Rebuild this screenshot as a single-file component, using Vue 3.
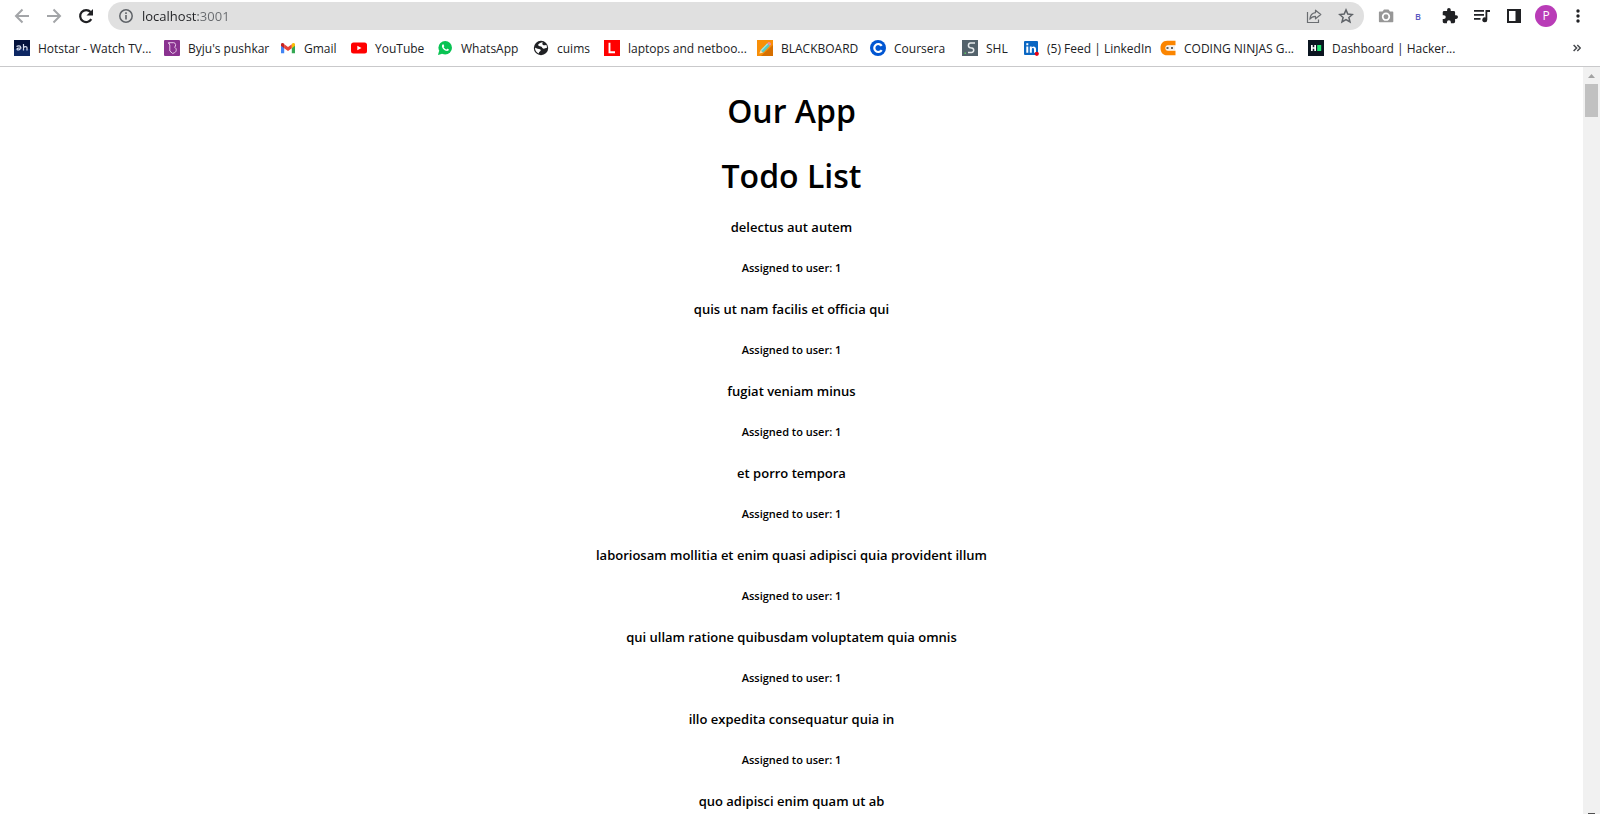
<script setup>
import { ref } from 'vue'

const address = ref('localhost:3001')

const bookmarks = [
  { icon: 'hotstar', label: 'Hotstar - Watch TV...' },
  { icon: 'byjus', label: "Byju's pushkar" },
  { icon: 'gmail', label: 'Gmail' },
  { icon: 'youtube', label: 'YouTube' },
  { icon: 'whatsapp', label: 'WhatsApp' },
  { icon: 'globe', label: 'cuims' },
  { icon: 'letter', label: 'laptops and netboo...' },
  { icon: 'pencil', label: 'BLACKBOARD' },
  { icon: 'coursera', label: 'Coursera' },
  { icon: 'shl', label: 'SHL' },
  { icon: 'linkedin', label: '(5) Feed | LinkedIn' },
  { icon: 'ninjas', label: 'CODING NINJAS G...' },
  { icon: 'hacker', label: 'Dashboard | Hacker...' },
]

const todos = [
  { id: 1, userId: 1, title: 'delectus aut autem' },
  { id: 2, userId: 1, title: 'quis ut nam facilis et officia qui' },
  { id: 3, userId: 1, title: 'fugiat veniam minus' },
  { id: 4, userId: 1, title: 'et porro tempora' },
  { id: 5, userId: 1, title: 'laboriosam mollitia et enim quasi adipisci quia provident illum' },
  { id: 6, userId: 1, title: 'qui ullam ratione quibusdam voluptatem quia omnis' },
  { id: 7, userId: 1, title: 'illo expedita consequatur quia in' },
  { id: 8, userId: 1, title: 'quo adipisci enim quam ut ab' },
]
</script>

<template>
  <div class="browser">
    <header class="chrome">
      <div class="toolbar">
        <button class="tool" aria-label="Back">
          <svg width="16" height="16" viewBox="0 0 16 16" fill="none" stroke="#a3a5a8" stroke-width="2"><path d="M15 8H2.5M8.5 1.500 2 8l6.500 6.500" /></svg>
        </button>
        <button class="tool" aria-label="Forward">
          <svg width="16" height="16" viewBox="0 0 16 16" fill="none" stroke="#a3a5a8" stroke-width="2"><path d="M1 8h12.500M7.500 1.500 14 8l-6.500 6.500" /></svg>
        </button>
        <button class="tool" aria-label="Reload">
          <svg width="16" height="16" viewBox="0 0 16 16"><path d="M13.300 11.200A6 6 0 1 1 12.600 4" fill="none" stroke="#202124" stroke-width="2.200" /><path d="M15 1v6.500H8.500z" fill="#202124" /></svg>
        </button>
        <div class="omnibox">
          <button class="site" aria-label="Site information">
            <svg width="14" height="14" viewBox="0 0 14 14"><circle cx="7" cy="7" r="6.200" fill="none" stroke="#5f6368" stroke-width="1.500" /><path d="M6.200 6h1.600v4.500H6.200zM6.200 3.300h1.600v1.600H6.200z" fill="#5f6368" /></svg>
          </button>
          <input v-model="address" class="address" type="text" aria-label="Address" spellcheck="false" />
          <button class="tool" aria-label="Share">
            <svg width="16" height="16" viewBox="0 0 16 16" fill="none" stroke="#6a6d71" stroke-width="1.200"><path d="M1.500 4v10.500h11V11.500" /><path d="M9.500 2.200 14.800 6.500 9.500 10.800V8.400C6.600 8.400 5 9.400 3.800 11.200 4.200 7.600 6 5.100 9.500 4.700z" stroke-linejoin="round" /></svg>
          </button>
          <button class="tool" aria-label="Bookmark this page">
            <svg width="16" height="16" viewBox="0 0 16 16"><path d="m8 1.900 1.800 4.200 4.600.4-3.500 3 1.100 4.500L8 11.600 4 14l1.100-4.500-3.500-3 4.600-.4z" fill="none" stroke="#5f6368" stroke-width="1.500" /></svg>
          </button>
        </div>
        <button class="tool" aria-label="Screenshot">
          <svg width="16" height="16" viewBox="0 0 16 16"><path d="M2 3.500h2.500L6 1.500h4.500l1.500 2h2.500a.8.8 0 0 1 .8.800V13.500a.8.8 0 0 1-.8.800H1.700a.8.800 0 0 1-.8-.8V4.300a.8.800 0 0 1 .8-.8z" fill="#979797" /><circle cx="8" cy="8.700" r="3.300" fill="none" stroke="#fff" stroke-width="1.700" /></svg>
        </button>
        <button class="tool ext" aria-label="Extension B">B</button>
        <button class="tool" aria-label="Extensions">
          <svg width="16" height="16" viewBox="1 1 22 22" fill="#202124"><path d="M20.500 11H19V7a2 2 0 0 0-2-2h-4V3.500a2.500 2.500 0 0 0-5 0V5H4a2 2 0 0 0-2 2v3.800h1.500a2.700 2.700 0 0 1 0 5.400H2V20a2 2 0 0 0 2 2h3.800v-1.500a2.700 2.700 0 0 1 5.400 0V22H17a2 2 0 0 0 2-2v-4h1.500a2.500 2.500 0 0 0 0-5z" /></svg>
        </button>
        <button class="tool" aria-label="Media controls">
          <svg width="18" height="16" viewBox="0 0 18 16" fill="#202124"><path d="M1 2h10v1.800H1zM1 6h10v1.800H1zM1 10h6.500v1.800H1z" /><path d="M12.500 2h4.500v1.900h-2.700v7.900a2.500 2.500 0 1 1-1.800-2.400z" /></svg>
        </button>
        <button class="tool" aria-label="Side panel">
          <svg width="14" height="14" viewBox="0 0 14 14"><path d="M0 0h14v14H0zM2 2v10h6.500V2z" fill="#202124" fill-rule="evenodd" /></svg>
        </button>
        <button class="tool" aria-label="Profile"><span class="avatar">P</span></button>
        <button class="tool" aria-label="Menu">
          <svg width="4" height="14" viewBox="0 0 4 14" fill="#202124"><circle cx="2" cy="2" r="1.700" /><circle cx="2" cy="7" r="1.700" /><circle cx="2" cy="12" r="1.700" /></svg>
        </button>
      </div>

      <nav class="bookmarks" aria-label="Bookmarks">
        <a v-for="b in bookmarks" :key="b.label" class="bookmark" href="#">
          <svg class="favicon" width="16" height="16" viewBox="0 0 16 16" aria-hidden="true">
            <template v-if="b.icon === 'hotstar'">
              <rect width="16" height="16" fill="#04123c" />
              <rect y="9" width="16" height="7" fill="#0d2763" />
              <path d="M2.500 6.500c1.500-1 4-1 4.200.8.200 2.700-3.700 3.600-3.700 1.700 0-1 2-1.200 4.500-.8M9.500 4v6.500M9.500 7.500c1-1.200 3.500-1.500 3.500.3v2.700" fill="none" stroke="#d5dcee" stroke-width="1.200" />
            </template>
            <template v-else-if="b.icon === 'byjus'">
              <rect width="16" height="16" rx="1" fill="#8a3290" />
              <path d="M4.500 2.700h5.300c2 0 2.500 3.300.8 4.600 2.300.8 2 4.400.2 5.200L8.700 13.500 5.800 11V5zM5.800 5l-1.300-2.300" fill="none" stroke="#e7c6e8" stroke-width="1" />
            </template>
            <template v-else-if="b.icon === 'gmail'">
              <path d="M1 3.500v9.700h3.200V6z" fill="#4285f4" />
              <path d="M11.800 6v7.200H15V4z" fill="#34a853" />
              <path d="M4.200 4.200 8 7l3.800-2.800v4L8 11 4.200 8.200z" fill="#ea4335" />
              <path d="M1 4.500C1 2.800 2.700 2.300 4.200 3.700v4.500L1 5.800z" fill="#c5221f" />
              <path d="M15 4.500c0-1.700-1.700-2.200-3.200-.8v4.500L15 5.800z" fill="#fbbc04" />
            </template>
            <template v-else-if="b.icon === 'youtube'">
              <rect y="2.500" width="16" height="11" rx="2.500" fill="#f00" />
              <path d="m6.300 5.700 4.200 2.300-4.200 2.300z" fill="#fff" />
            </template>
            <template v-else-if="b.icon === 'whatsapp'">
              <circle cx="8.200" cy="7.800" r="6.800" fill="#08c353" />
              <path d="m1 15 1.200-4.500 3.200 3.300z" fill="#08c353" />
              <path d="M5.200 5c.8-1.200 1.400-.7 2 .9.200.7-.9.900-.4 1.600.7 1 1.500 1.600 2.300 1.900.7.200.8-1 1.500-.7 1.800.8 1.500 1.100.7 1.900C9 12.300 3.700 8 5.200 5z" fill="#fff" />
            </template>
            <template v-else-if="b.icon === 'globe'">
              <circle cx="8" cy="8" r="7.200" fill="#202124" />
              <path d="M9.800 2.300C8 2.600 6 3.200 5.200 4.600c-.4 1 .8 1.700 2.800 2 1.400.3 1 2 2.600 2.100 1.200.1 2-.7 3.200-.7.300-1.300 0-2.300-.6-3.300-1 .6-2.300.7-3.200.2-.9-.6-.8-1.600-.2-2.600zM2 7.700c1.500.2 2.300 1.200 4 1.200 1.400 0 2 .8 1.600 1.900-.4 1-1.700.8-1.800 2.600C3.300 12.500 2 10.500 2 7.700z" fill="#fff" />
            </template>
            <template v-else-if="b.icon === 'letter'">
              <rect width="16" height="16" fill="#f00" />
              <path d="M5.500 2.700v9.600h5.500" fill="none" stroke="#fff" stroke-width="1.900" />
            </template>
            <template v-else-if="b.icon === 'pencil'">
              <rect width="16" height="16" fill="#f88f08" />
              <path d="M16 5v11H4z" fill="#d66f00" />
              <path d="m3.500 10.200 6.800-7 2.600 2.600-6.900 7z" fill="#5cc9c1" />
              <path d="m3.500 10.200 6.800-7 .9.900-6.800 7z" fill="#a8e6dd" />
              <path d="m10.300 3.200 1.100-1.100c1-.8 3.300 1.200 2.600 2.400l-1.100 1.300z" fill="#ef8d9b" />
              <path d="m2.300 13.600 1.200-3.400L6 12.800z" fill="#f6dfae" />
            </template>
            <template v-else-if="b.icon === 'coursera'">
              <circle cx="8" cy="8" r="8" fill="#0056d2" />
              <path d="M11.700 5.900A4 4 0 1 0 11.700 10.100" fill="none" stroke="#fff" stroke-width="2.200" />
            </template>
            <template v-else-if="b.icon === 'shl'">
              <rect width="16" height="16" fill="#53626b" />
              <path d="M13 3H8.500C6 3 5.500 7.500 8.500 7.700c4.500 0 3.800 4.800 1 4.800H6" fill="none" stroke="#e6eaec" stroke-width="1.500" />
              <path d="M2.500 12.500h1.500v1.500H2.500z" fill="#5fc463" />
            </template>
            <template v-else-if="b.icon === 'linkedin'">
              <rect x="1" y="1" width="14" height="14" rx="1" fill="#0a66c2" />
              <path d="M3.300 6.500h2v6.300h-2zM3.300 3.300h2v2h-2zM6.800 6.500h1.900v.9c1.200-1.700 4.300-1.300 4.300 1.700v3.700h-2V9.500c0-2-2.200-1.900-2.200 0v3.300h-2z" fill="#fff" />
              <circle cx="13.800" cy="13.800" r="2.100" fill="#e60012" />
            </template>
            <template v-else-if="b.icon === 'ninjas'">
              <path d="M15.500.7H7.300C2.500.7.500 4 .5 8s2 7.300 6.800 7.300h8.200v-4.500H8c-3.500 0-3.500-5.600 0-5.600h7.500z" fill="#fb8500" />
              <path d="M6 6h9v4H6z" fill="#f2f2f2" />
              <path d="M6.500 7.300h2v1.400h-2zM11 7.300h2v1.400h-2z" fill="#353535" />
            </template>
            <template v-else>
              <rect width="16" height="16" fill="#0b1520" />
              <path d="M3 5h1.700v2.200h1.600V5H8v6H6.300V8.800H4.700V11H3z" fill="#fff" />
              <rect x="9.200" y="5" width="4" height="6" fill="#1ee873" />
            </template>
          </svg>
          <span>{{ b.label }}</span>
        </a>
        <button class="more" aria-label="More bookmarks">
          <svg width="8" height="8" viewBox="0 0 8 8" fill="none" stroke="#46494d" stroke-width="1.500"><path d="m.6 1 3 3-3 3M4.300 1l3 3-3 3" /></svg>
        </button>
      </nav>
    </header>

    <div class="viewport">
      <main class="page">
        <h1>Our App</h1>
        <h1>Todo List</h1>
        <article v-for="todo in todos" :key="todo.id">
          <h5>{{ todo.title }}</h5>
          <h6>Assigned to user: {{ todo.userId }}</h6>
        </article>
      </main>
      <div class="scrollbar" aria-hidden="true">
        <svg class="up" width="17" height="17" viewBox="0 0 17 17"><path d="M5 11 8.500 7l3.500 4z" fill="#a3a3a3" /></svg>
        <div class="thumb"></div>
        <div class="down"></div>
      </div>
    </div>
  </div>
</template>

<style>
body {
  margin: 0;
  background: #fff;
}
</style>

<style scoped>
.browser {
  display: flex;
  flex-direction: column;
  height: 100vh;
  overflow: hidden;
  font-family: "Open Sans", "Noto Sans", sans-serif;
  color: #000;
}
button {
  display: flex;
  align-items: center;
  justify-content: center;
  padding: 0;
  border: 0;
  background: none;
  font-family: inherit;
}
.chrome {
  flex: none;
  border-bottom: 1px solid #c9c9cb;
}
.toolbar {
  display: flex;
  align-items: center;
  height: 32px;
  padding: 0 6px;
}
.tool {
  flex: none;
  width: 32px;
  height: 28px;
}
.omnibox {
  flex: 1;
  display: flex;
  align-items: center;
  height: 28px;
  margin: 0 6px;
  padding: 0 2px 0 10px;
  border-radius: 14px;
  background: #e0e0e0;
}
.site {
  width: 16px;
  height: 16px;
}
.address {
  flex: 1;
  min-width: 0;
  height: 28px;
  margin-left: 8px;
  padding: 0;
  border: 0;
  outline: 0;
  font-family: inherit;
  font-size: 13px;
  background: linear-gradient(90deg, #202124 56px, #676a6e 56px);
  -webkit-background-clip: text;
  background-clip: text;
  -webkit-text-fill-color: transparent;
}
.ext {
  font-size: 9px;
  font-weight: 600;
  color: #5b57c0;
}
.avatar {
  width: 22px;
  border-radius: 50%;
  background: #b93cb7;
  color: #fff;
  font-size: 12px;
  line-height: 22px;
}
.bookmarks {
  display: grid;
  grid-template-columns: 150px 116px 71px 86px 96px 71px 153px 113px 92px 61px 137px 148px 1fr auto;
  align-items: center;
  height: 32px;
  padding: 0 18px 2px 14px;
}
.bookmark {
  display: flex;
  align-items: center;
  gap: 8px;
  height: 28px;
  color: #202124;
  font-size: 12px;
  white-space: nowrap;
  text-decoration: none;
}
.favicon {
  flex: none;
  overflow: visible;
}
.more {
  width: 10px;
  height: 28px;
}
.viewport {
  flex: 1;
  display: flex;
  min-height: 0;
}
.page {
  flex: 1;
  padding-top: 2px;
  overflow: hidden;
  text-align: center;
}
h1,
h5,
h6 {
  font-weight: 600;
}
h1 {
  margin: 19px 0;
  font-size: 32px;
  line-height: 46px;
}
h5 {
  margin: 19px 0;
  font-size: 13px;
  line-height: 18px;
}
h6 {
  margin: 25px 0;
  font-size: 11px;
  line-height: 14px;
}
.scrollbar {
  flex: none;
  display: flex;
  flex-direction: column;
  align-items: center;
  width: 17px;
  background: #f1f1f1;
}
.thumb {
  width: 13px;
  height: 33px;
  background: #c1c1c1;
}
.down {
  width: 7px;
  height: 1px;
  margin-top: auto;
  background: #505050;
}
</style>
